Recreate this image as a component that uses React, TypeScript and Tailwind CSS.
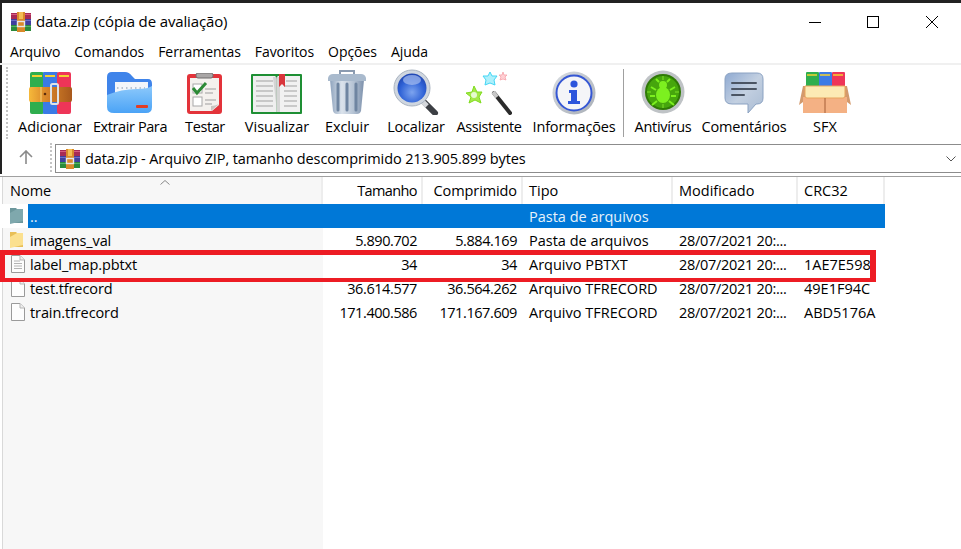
import React from 'react';

const Books: React.FC<{ id: string }> = ({ id }) => (
  <svg width={44} height={44} viewBox="0 0 44 44">
    <defs>
      <linearGradient id={id + 'b'} x1="0" x2="1" y1="0" y2="0">
        <stop offset="0" stopColor="#f6b93a" />
        <stop offset="0.4" stopColor="#d9862a" />
        <stop offset="1" stopColor="#a8591c" />
      </linearGradient>
    </defs>
    <rect x="2" y="1" width="14" height="42" rx="2" fill="#2fae4e" />
    <rect x="15" y="1" width="15" height="42" rx="1" fill="#3b7be6" />
    <rect x="29" y="1" width="14" height="42" rx="2" fill="#ee3558" />
    <rect x="4" y="4" width="10" height="2" fill="#f3d230" />
    <rect x="17" y="4" width="10" height="2" fill="#f3d230" />
    <rect x="31" y="4" width="10" height="2" fill="#f3d230" />
    <rect x="1" y="16" width="43" height="15" rx="2" fill={'url(#' + id + 'b)'} />
    <rect x="23" y="13" width="7" height="20" rx="1.5" fill="none" stroke="#dfe3e6" strokeWidth="2" />
    <circle cx="17" cy="23" r="1.3" fill="#5c2c0c" />
    <path d="M13 16 v15" stroke="#f9d27a" strokeWidth="1" />
  </svg>
);

// the small archive icon has the books lying flat, with the strap upright
const BooksSmall = () => (
  <svg width="20" height="20" viewBox="0 0 20 20">
    <rect x="0" y="1" width="20" height="6" fill="#a82a55" />
    <rect x="0" y="7" width="20" height="6" fill="#3f3f9e" />
    <rect x="0" y="13" width="20" height="6" fill="#2b8a3c" />
    <rect x="0" y="2" width="20" height="1" fill="#d65a80" />
    <rect x="0" y="8" width="20" height="1" fill="#6f6fc8" />
    <rect x="0" y="14" width="20" height="1" fill="#56b368" />
    <rect x="6" y="0" width="8" height="20" fill="#d98a2b" />
    <rect x="8" y="0" width="4" height="7" fill="#f3bd55" />
    <rect x="6.5" y="9.5" width="7" height="5" fill="none" stroke="#e8e8e8" strokeWidth="1.4" />
  </svg>
);

const FolderIcon = () => (
  <svg width="46" height="44" viewBox="0 0 46 44">
    <defs>
      <linearGradient id="fold" x1="0" x2="0" y1="0" y2="1">
        <stop offset="0" stopColor="#8cc9fb" />
        <stop offset="1" stopColor="#4ba3f6" />
      </linearGradient>
    </defs>
    <path d="M0 6 Q0 1 5 1 H18 Q22 1 25 5 L28 8 H41 Q45 8 45 13 V36 H0 Z" fill="#3f84ea" />
    <rect x="8" y="11" width="33" height="14" fill="#f3f6fa" />
    <path d="M10 17 h28" stroke="#b9c4d2" strokeWidth="2" strokeDasharray="1.5 3" />
    <path d="M0 24 Q14 18 30 18 Q41 18 45 15 V36 Q45 42 39 42 H7 Q0 42 0 36 Z" fill="url(#fold)" />
    <rect x="29" y="34" width="12" height="3" rx="1" fill="#e23d24" />
  </svg>
);

const ClipboardIcon = () => (
  <svg width="36" height="42" viewBox="0 0 36 42">
    <rect x="0" y="1" width="35" height="40" rx="3" fill="#e3333a" />
    <path d="M3 5 H32 V32 L25 38 H3 Z" fill="#f4f1ee" />
    <path d="M32 31 L24 38 V33 Q28 33 32 31 Z" fill="#c9c5c1" />
    <rect x="9" y="0" width="17" height="5" rx="2" fill="#a9a6a6" stroke="#6f6d6d" strokeWidth="1" />
    <rect x="6" y="11" width="9" height="9" fill="#fff" stroke="#a8a8a8" />
    <rect x="6" y="24" width="9" height="9" fill="#fff" stroke="#a8a8a8" />
    <path d="M6 15 L10 20 L19 10" fill="none" stroke="#2c8a36" strokeWidth="3" />
    <path d="M18 16 h11 M18 20 h8 M18 27 h11 M18 31 h7" stroke="#9d9d9d" strokeWidth="1.2" />
  </svg>
);

const BookIcon = () => (
  <svg width="52" height="42" viewBox="0 0 52 42">
    <rect x="0" y="1" width="51" height="40" rx="1" fill="#1e8f34" />
    <path d="M2 3 H24 Q25 3 25.5 6 V39 H2 Z" fill="#efefef" />
    <path d="M49 3 H27 Q26 3 25.5 6 V39 H49 Z" fill="#f1f1f1" />
    <path d="M22 4 L26 39 H29 L29 4 Z" fill="#bdbdbd" opacity="0.55" />
    <path d="M5 8 h17 M5 13 h17 M5 18 h17 M5 23 h17 M5 28 h17 M5 33 h17" stroke="#bcbcbc" strokeWidth="1.3" />
    <path d="M33 13 h13 M33 18 h13 M33 23 h13 M33 28 h13 M33 33 h13 M35 8 h11" stroke="#bcbcbc" strokeWidth="1.3" />
    <path d="M28 1 H34 V14 L31 11 L28 14 Z" fill="#d9363c" />
  </svg>
);

const TrashIcon = () => (
  <svg width="40" height="46" viewBox="0 0 40 46">
    <defs>
      <linearGradient id="can" x1="0" x2="1" y1="0" y2="0">
        <stop offset="0" stopColor="#8ea3bd" />
        <stop offset="0.35" stopColor="#dbe3ec" />
        <stop offset="0.7" stopColor="#b4c2d3" />
        <stop offset="1" stopColor="#7d91ac" />
      </linearGradient>
    </defs>
    <path d="M13 6 V2 H27 V6" fill="none" stroke="#8b9bb0" strokeWidth="2" />
    <path d="M3 11 H37 L34 42 Q33 45 30 45 H10 Q7 45 6 42 Z" fill="url(#can)" />
    <path d="M1 9 Q2 5 6 5 H34 Q38 5 39 9 V12 H1 Z" fill="#a9bacd" />
    <path d="M11 15 V41 M20 15 V41 M29 15 V41" stroke="#6f85a1" strokeWidth="3" strokeLinecap="round" />
  </svg>
);

const LensIcon = () => (
  <svg width="46" height="46" viewBox="0 0 46 46">
    <defs>
      <radialGradient id="lens" cx="0.5" cy="0.65" r="0.7">
        <stop offset="0" stopColor="#7da4ef" />
        <stop offset="0.6" stopColor="#2f62d6" />
        <stop offset="1" stopColor="#1c3fa8" />
      </radialGradient>
    </defs>
    <path d="M29 31 L42 44" stroke="#3c3f44" strokeWidth="6" strokeLinecap="round" />
    <path d="M29 32 L34 37" stroke="#d5d8dc" strokeWidth="5" />
    <circle cx="19" cy="19" r="18" fill="#cfd6df" stroke="#aab4c1" strokeWidth="1" />
    <circle cx="19" cy="19" r="14.5" fill="url(#lens)" />
    <ellipse cx="19" cy="11" rx="9" ry="5" fill="#a6bdf0" opacity="0.7" />
  </svg>
);

const WandIcon = () => (
  <svg width="46" height="44" viewBox="0 0 46 44">
    <path d="M28 22 L44 42" stroke="#2b2b2b" strokeWidth="4" strokeLinecap="round" />
    <path d="M27 21 L31 26" stroke="#c8c8c8" strokeWidth="4" />
    <path d="M8 15 L11 21 L16 21 L13 26 L15 32 L9 29 L3 32 L5 26 L0 22 L6 21 Z" fill="#a6e84a" stroke="#7fdc1e" strokeWidth="1" />
    <circle cx="8" cy="24" r="3" fill="#e6fbd0" />
    <path d="M24 1 L26 5 L31 5 L28 9 L29 14 L24 12 L19 14 L20 9 L17 5 L22 5 Z" fill="#aef0fb" stroke="#45d6f5" strokeWidth="1" />
    <path d="M37 1 L38 4 L41 4 L39 6 L40 9 L37 8 L34 9 L35 6 L33 4 L36 4 Z" fill="#ffd0d4" stroke="#f6a2aa" strokeWidth="0.8" />
  </svg>
);

const InfoIcon = () => (
  <svg width="44" height="44" viewBox="0 0 44 44">
    <defs>
      <linearGradient id="ring" x1="0" x2="1" y1="0" y2="1">
        <stop offset="0" stopColor="#d9dde2" />
        <stop offset="1" stopColor="#a8aeb6" />
      </linearGradient>
    </defs>
    <circle cx="22" cy="22" r="21.5" fill="url(#ring)" />
    <circle cx="22" cy="22" r="17.5" fill="#f4f5f8" stroke="#3557d4" strokeWidth="2" />
    <circle cx="22" cy="13" r="3.6" fill="#2c55dc" />
    <path d="M17 19 H25 V30 H28 V33 H16 V30 H19 V22 H17 Z" fill="#2c55dc" />
  </svg>
);

const BugIcon = () => (
  <svg width="44" height="45" viewBox="0 0 44 45">
    <circle cx="22" cy="22" r="21.5" fill="#bfc3c6" />
    <circle cx="22" cy="22" r="18" fill="#2f7a06" />
    <circle cx="22" cy="22" r="16" fill="#46a60d" />
    <path d="M22 6 v4 M22 34 v4 M6 22 h4 M34 22 h4" stroke="#7ee02a" strokeWidth="1" />
    <ellipse cx="22" cy="25" rx="7" ry="8" fill="#7cf01f" />
    <circle cx="22" cy="15" r="4" fill="#7cf01f" />
    <path d="M18 12 L15 9 M26 12 L29 9 M15 20 L10 17 M29 20 L34 17 M14 26 H9 M30 26 H35 M16 31 L11 35 M28 31 L33 35" stroke="#7cf01f" strokeWidth="2" />
  </svg>
);

const CommentIcon = () => (
  <svg width="40" height="43" viewBox="0 0 40 43">
    <defs>
      <linearGradient id="msg" x1="0" x2="1" y1="0" y2="1">
        <stop offset="0" stopColor="#8faad2" />
        <stop offset="0.5" stopColor="#c3d0e1" />
        <stop offset="1" stopColor="#a9bbd3" />
      </linearGradient>
    </defs>
    <path d="M8 1 H33 Q39 1 39 7 V26 Q39 32 33 32 H32 L24 41 V32 H8 Q1 32 1 26 V7 Q1 1 8 1 Z" fill="url(#msg)" stroke="#8ba2c2" strokeWidth="1" />
    <path d="M8 11 H32 M8 17 H32 M8 23 H20" stroke="#4b5564" strokeWidth="2" strokeLinecap="round" />
  </svg>
);

const BoxIcon = () => (
  <svg width="52" height="43" viewBox="0 0 52 43">
    <rect x="7" y="0" width="13" height="16" rx="1" fill="#2fae4e" />
    <rect x="20" y="0" width="13" height="16" rx="1" fill="#3b7be6" />
    <rect x="33" y="0" width="13" height="16" rx="1" fill="#ee3558" />
    <path d="M8 3 h10 M21 3 h10 M34 3 h10" stroke="#f3d230" strokeWidth="1.5" />
    <path d="M4 14 L0 33 L4 30 H48 L52 33 L48 14 Z" fill="#d39a6d" />
    <rect x="4" y="25" width="44" height="16" fill="#f4b184" />
    <path d="M6 14 H46 L46 24 Q46 26 44 26 H8 Q6 26 6 24 Z" fill="#fceab4" stroke="#e8a55f" strokeWidth="1" />
    <path d="M26 26 V41" stroke="#a65f36" strokeWidth="1" />
  </svg>
);

const GenericFile: React.FC<{ lines?: boolean }> = ({ lines }) => (
  <svg width="16" height="18" viewBox="0 0 16 18">
    <path d="M1.5 0.5 H10 L14.5 5 V17.5 H1.5 Z" fill="#fdfdfd" stroke="#9a9a9a" />
    <path d="M10 0.5 V5 H14.5" fill="#efefef" stroke="#b5b5b5" />
    {lines && <path d="M4 6 h6 M4 8.5 h8 M4 11 h8 M4 13.5 h8" stroke="#b4b4b4" />}
  </svg>
);

const FolderSmall: React.FC<{ color: string; back: string }> = ({ color, back }) => (
  <svg width="14" height="18" viewBox="0 0 14 18">
    <path d="M0 1 H6 L8 3 H13 V16 H0 Z" fill={back} />
    <path d="M0 6 L7 2 H13 V14 L0 17 Z" fill={color} />
  </svg>
);

const tools = [
  { label: 'Adicionar', w: 'w-[80px]', icon: <Books id="big" /> },
  { label: 'Extrair Para', w: 'w-[80px] tracking-[-0.4px]', icon: <FolderIcon /> },
  { label: 'Testar', w: 'w-[70px] tracking-[-0.4px]', icon: <ClipboardIcon /> },
  { label: 'Visualizar', w: 'w-[74px]', icon: <BookIcon /> },
  { label: 'Excluir', w: 'w-[66px] tracking-[-0.1px]', icon: <TrashIcon /> },
  { label: 'Localizar', w: 'w-[72px] tracking-[-0.2px]', icon: <LensIcon /> },
  { label: 'Assistente', w: 'w-[74px] tracking-[-0.4px]', icon: <WandIcon /> },
  { label: 'Informações', w: 'w-[96px] tracking-[-0.15px]', icon: <InfoIcon /> },
];

const tools2 = [
  { label: 'Antivírus', w: 'w-[72px] mr-[3px] tracking-[-0.3px]', icon: <BugIcon /> },
  { label: 'Comentários', w: 'w-[84px] tracking-[-0.15px]', icon: <CommentIcon /> },
  { label: 'SFX', w: 'w-[78px]', icon: <BoxIcon /> },
];

const menus = ['Arquivo', 'Comandos', 'Ferramentas', 'Favoritos', 'Opções', 'Ajuda'];

const rows = [
  { name: '..', size: '', packed: '', type: 'Pasta de arquivos', date: '', crc: '', icon: <FolderSmall color="#7fa8ad" back="#6c979c" /> },
  { name: 'imagens_val', size: '5.890.702', packed: '5.884.169', type: 'Pasta de arquivos', date: '28/07/2021 20:...', crc: '', icon: <FolderSmall color="#fbe08f" back="#e8bf57" /> },
  { name: 'label_map.pbtxt', size: '34', packed: '34', type: 'Arquivo PBTXT', date: '28/07/2021 20:...', crc: '1AE7E598', icon: <GenericFile lines /> },
  { name: 'test.tfrecord', size: '36.614.577', packed: '36.564.262', type: 'Arquivo TFRECORD', date: '28/07/2021 20:...', crc: '49E1F94C', icon: <GenericFile /> },
  { name: 'train.tfrecord', size: '171.400.586', packed: '171.167.609', type: 'Arquivo TFRECORD', date: '28/07/2021 20:...', crc: 'ABD5176A', icon: <GenericFile /> },
];

const Grip = () => (
  <div className="w-[2px] self-stretch border-l-2 border-dotted border-[#c4c4c4]" />
);

const ToolButton: React.FC<{ label: string; w: string; icon: React.ReactNode }> = ({ label, w, icon }) => (
  <div className={`${w} flex flex-col items-center shrink-0 pt-[4px]`}>
    <div className="h-[46px] flex items-end justify-center">{icon}</div>
    <span className="mt-[2px] whitespace-nowrap leading-[20px]">{label}</span>
  </div>
);

const App: React.FC = () => {
  return (
    <div className="relative w-[961px] h-[549px] overflow-hidden bg-white text-[14.5px] text-black font-['Open_Sans',sans-serif] flex flex-col">
      <div className="h-[3px] bg-[#222222] shrink-0" />

      <div className="h-[37px] shrink-0 flex items-center pl-[9px] border-l-2 border-[#222222]">
        <BooksSmall />
        <span className="ml-[5px] text-[15px] tracking-[-0.14px]">data.zip (cópia de avaliação)</span>
        <div className="ml-auto flex items-center">
          <svg width="152" height="14" viewBox="0 0 152 14">
            <path d="M0 7.5 H12" stroke="#000" />
            <rect x="58.5" y="1.5" width="11" height="11" fill="none" stroke="#000" />
            <path d="M117 1 L129 13 M129 1 L117 13" stroke="#000" />
          </svg>
        </div>
      </div>

      <div className="h-[23px] shrink-0 flex items-center gap-[14px] pl-[8px] border-l-2 border-[#222222] text-[14px] tracking-[-0.05px]">
        {menus.map((m) => (
          <span key={m}>{m}</span>
        ))}
      </div>

      <div className="h-[2px] bg-[#f0f0f0] shrink-0" />

      <div className="h-[76px] shrink-0 flex border-l-2 border-[#222222] pl-[4px]">
        <div className="py-[2px] flex"><Grip /></div>
        <div className="flex pl-[2px]">
          {tools.map((t) => (
            <ToolButton key={t.label} {...t} />
          ))}
        </div>
        <div className="w-px bg-[#a0a0a0] mt-[4px] mb-[4px] ml-[1px]" />
        <div className="flex ml-[3px]">
          {tools2.map((t) => (
            <ToolButton key={t.label} {...t} />
          ))}
        </div>
      </div>

      <div className="h-[33px] shrink-0 flex border-l-2 border-[#222222] items-stretch">
        <div className="w-[48px] flex items-center justify-center pb-[2px]">
          <svg width="14" height="14" viewBox="0 0 14 14">
            <path d="M7 14 V1 M1 7 L7 1 L13 7" fill="none" stroke="#8a8a8a" strokeWidth="1.6" />
          </svg>
        </div>
        <div className="py-[2px] flex"><Grip /></div>
        <div className="ml-[3px] mt-[3px] mb-[1px] flex-1 flex items-center border-y border-l border-[#8c8c8c] pl-[4px]">
          <BooksSmall />
          <span className="ml-[5px] tracking-[-0.11px]">data.zip - Arquivo ZIP, tamanho descomprimido 213.905.899 bytes</span>
          <svg width="10" height="6" viewBox="0 0 10 6" className="ml-auto mr-[5px]">
            <path d="M0.5 0.5 L5 5 L9.5 0.5" fill="none" stroke="#555" />
          </svg>
        </div>
      </div>

      <div className="flex-1 mt-[2px] border-t border-[#a0a0a0] pl-[2px] relative min-h-0">
        <div className="absolute left-[2px] top-0 bottom-0 w-[321px] bg-[#f7f7f7] border-l border-[#d9d9d9]" />
        <div className="relative">
          <div className="flex h-[27px] items-center">
            <div className="w-[321px] pl-[8px] pt-[1px] h-full flex items-center border-r-2 border-[#ededed]">Nome</div>
            <div className="w-[100px] pr-[4px] pt-[1px] h-full flex items-center justify-end border-r-2 border-[#ededed] tracking-[-0.6px]">Tamanho</div>
            <div className="w-[100px] pr-[4px] pt-[1px] h-full flex items-center justify-end border-r-2 border-[#ededed] tracking-[-0.1px]">Comprimido</div>
            <div className="w-[150px] pl-[6px] pt-[1px] h-full flex items-center border-r-2 border-[#ededed]">Tipo</div>
            <div className="w-[125px] pl-[6px] pt-[1px] h-full flex items-center border-r-2 border-[#ededed]">Modificado</div>
            <div className="w-[87px] pl-[6px] pt-[1px] h-full flex items-center border-r-2 border-[#ededed]">CRC32</div>
          </div>
          {rows.map((r, i) => {
            const sel = i === 0;
            return (
              <div key={r.name} className="flex h-[24px] items-center">
                <div className={`w-[26px] h-full shrink-0 flex items-center pl-[8px] ${sel ? 'bg-white' : ''}`}>{r.icon}</div>
                <div className={`flex h-full items-center pt-[1px] ${sel ? 'bg-[#0078d7] text-[#e8f3fb]' : ''}`}>
                  <div className="w-[295px] pl-[2px] tracking-[-0.1px]">{r.name}</div>
                  <div className="w-[100px] pr-[6px] text-right tracking-[-0.42px]">{r.size}</div>
                  <div className="w-[100px] pr-[6px] text-right tracking-[-0.42px]">{r.packed}</div>
                  <div className="w-[150px] pl-[6px] whitespace-nowrap">{r.type}</div>
                  <div className="w-[125px] pl-[6px] whitespace-nowrap tracking-[-0.3px]">{r.date}</div>
                  <div className="w-[87px] pl-[6px]">{r.crc}</div>
                </div>
              </div>
            );
          })}
          <svg width="10" height="5" viewBox="0 0 10 5" className="absolute left-[158px] top-[3px]">
            <path d="M0.5 4.5 L5 0.5 L9.5 4.5" fill="none" stroke="#8a8a8a" />
          </svg>
        </div>
      </div>

      <div className="absolute left-0 top-[250px] w-[876px] h-[32px] border-t-[5px] border-b-[4px] border-l-[5px] border-r-[6px] border-[#ed1c24]" />
    </div>
  );
};

export default App;
